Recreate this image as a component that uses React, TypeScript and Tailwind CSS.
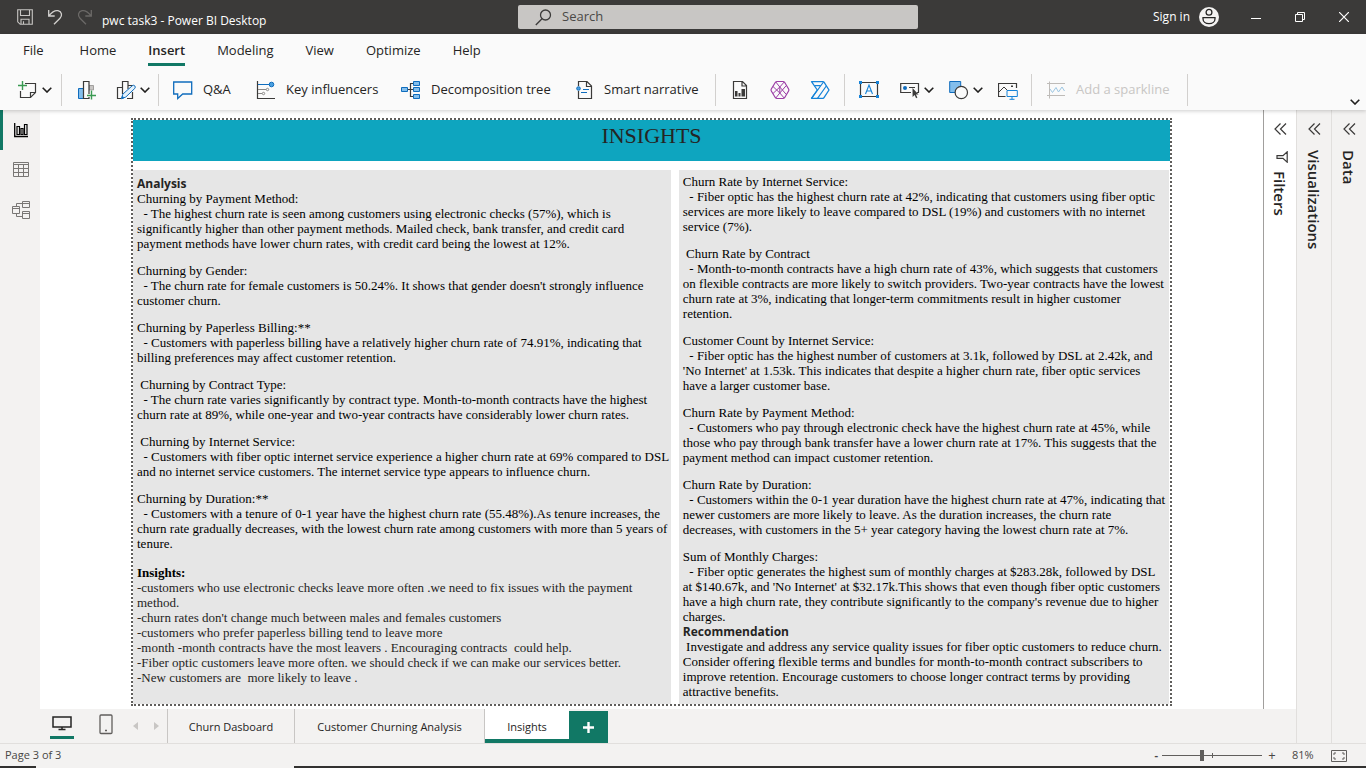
import React, { ReactNode } from "react";

const INK = "#3b3a39";
const BLUE = "#0f6cbd";

function Svg({ w = 20, h = 20, children, className = "" }: { w?: number; h?: number; children: ReactNode; className?: string }) {
  return (
    <svg width={w} height={h} viewBox={`0 0 ${w} ${h}`} fill="none" stroke={INK} className={`shrink-0 ${className}`} aria-hidden="true">
      {children}
    </svg>
  );
}

function Chevron() {
  return (
    <Svg w={10} h={6}>
      <path d="M0.7 0.7 5 5 9.3 0.7" stroke="#201f1e" strokeWidth="1.6" />
    </Svg>
  );
}

function Collapse() {
  return (
    <Svg w={13} h={12}>
      <path d="M6.5 .5 1 6l5.5 5.5M12 .5 6.5 6l5.5 5.5" stroke={INK} strokeWidth="1.2" />
    </Svg>
  );
}

function TitleBar() {
  return (
    <header className="flex h-[34px] items-center bg-[#3b3a39] text-white">
      <button aria-label="Save" className="ml-[17px]">
        <Svg w={16} h={16}>
          <path d="M.7 .7h14.6v14.6H3.2L.7 12.8zM3.5.7v5.8h9V.7M4 15.3v-5h8v5M6.5 12.3v3" stroke="#c8c6c4" strokeWidth="1.1" />
        </Svg>
      </button>
      <button aria-label="Undo" className="ml-[14px]">
        <Svg w={16} h={16}>
          <path d="M1.7 1v6h6M2 6.7C5 3 8 1 11 1.7c4 1 4.5 5 2 7.5L7 15.3" stroke="#d2d0ce" strokeWidth="1.3" />
        </Svg>
      </button>
      <button aria-label="Redo" className="ml-[14px]">
        <Svg w={16} h={16}>
          <path d="M14.3 1v6h-6M14 6.7C11 3 8 1 5 1.7c-4 1-4.5 5-2 7.5l6 6.1" stroke="#6b6967" strokeWidth="1.3" />
        </Svg>
      </button>
      <h1 className="ml-[9px] mt-2 w-[416px] text-xs">pwc task3 - Power BI Desktop</h1>
      <label className="flex h-6 w-[400px] items-center rounded-[2px] bg-[#c8c6c4] pl-[17px]">
        <Svg w={17} h={17}>
          <circle cx="10.5" cy="6" r="5" strokeWidth="1.3" />
          <path d="M7 9.8.8 16" strokeWidth="1.3" />
        </Svg>
        <input aria-label="Search" placeholder="Search" className="ml-[10px] w-full bg-transparent text-[13px] text-[#3b3a39] outline-none placeholder:text-[#4a4947]" />
      </label>
      <button className="ml-auto flex items-center gap-[9px] text-xs">
        Sign in
        <Svg w={20} h={20}>
          <circle cx="10" cy="10" r="10" fill="#f3f2f1" stroke="none" />
          <circle cx="10" cy="5.3" r="2.9" strokeWidth="1.3" stroke="#252423" />
          <path d="M4 10.7h12v1c0 3-2.5 5-6 5s-6-2-6-5z" strokeWidth="1.3" stroke="#252423" />
        </Svg>
      </button>
      <button aria-label="Minimize" className="ml-8">
        <Svg w={10} h={10}><path d="M0 6.5h10" stroke="#fff" /></Svg>
      </button>
      <button aria-label="Restore" className="ml-[34px]">
        <Svg w={10} h={10}><path d="M.5 2.5h7v7h-7zM2.5 2.5v-2h7v7h-2" stroke="#fff" /></Svg>
      </button>
      <button aria-label="Close" className="ml-[34px] mr-[17px]">
        <Svg w={10} h={10}><path d="M0 0l10 10M10 0 0 10" stroke="#fff" strokeWidth="1.2" /></Svg>
      </button>
    </header>
  );
}

function Tabs() {
  const tabs = ["Home", "Insert", "Modeling", "View", "Optimize", "Help"];
  return (
    <nav className="flex h-8 gap-8 pl-[23px] text-[13px] text-[#252423]">
      <button className="mr-1 h-8 pt-0.5">File</button>
      {tabs.map((t) => (
        <button key={t} className={t === "Insert" ? "-mb-px h-8 border-b-[3px] border-[#117865] pt-1 font-semibold" : "h-8 pt-0.5"}>
          {t}
        </button>
      ))}
    </nav>
  );
}

function Group({ children, className }: { children: ReactNode; className: string }) {
  return <div className={`flex h-8 shrink-0 items-center border-r border-[#d2d0ce] ${className}`}>{children}</div>;
}

function Ribbon() {
  return (
    <div className="flex h-11 pt-2 text-[13px] text-[#252423]">
      <Group className="w-[62px] pl-[17px]">
        <button aria-label="New page" className="flex items-center gap-[5px]">
          <Svg>
            <path d="M8 3.5h10.5v9l-5 5h-10V11" strokeWidth="1.2" />
            <path d="M18.5 12.5h-5v5" strokeWidth="1.2" />
            <path d="M5.5 1v9M1 5.500h9" stroke="#3a9a52" strokeWidth="1.4" />
          </Svg>
          <Chevron />
        </button>
      </Group>
      <Group className="w-[97px] gap-[19px] pl-[15px]">
        <button aria-label="New visual">
          <Svg>
            <path d="M1.5 8.5h5v10h-5z" fill="#83beec" stroke={BLUE} />
            <path d="M12 5.5h4.5V10H12z" fill="#c8c6c4" stroke="#a19f9d" />
            <path d="M12 18.5H6.5v-17H12z" strokeWidth="1.2" fill="#fafafa" />
            <path d="M14.500 10.500v9M10 15.500h9" stroke="#fafafa" strokeWidth="3" />
            <path d="M14.500 10.500v9M10 15.500h9" stroke="#3a9a52" strokeWidth="1.4" />
          </Svg>
        </button>
        <button aria-label="More visuals" className="flex items-center gap-1">
          <Svg>
            <path d="M5 18.5H1.500v-11h5M6.500 14V1.500H12V9M12 5.500h5M11 18.500h5.500V12" strokeWidth="1.2" />
            <path d="m5.500 18.700 1.300-4.500 9.500-8.500q1.500-1 2.500.200t0 2.500L9.800 17z" fill="#e3f1fb" stroke={BLUE} />
            <path d="m5.500 18.700.8-2.700 1.800 2z" fill={BLUE} stroke={BLUE} strokeWidth=".5" />
          </Svg>
          <Chevron />
        </button>
      </Group>
      <Group className="w-[557px] pl-[14px]">
        <button className="flex w-[83px] items-center gap-[10px]">
          <Svg>
            <path d="M.7 2h18v12h-9l-5 4.5V14h-4z" stroke={BLUE} strokeWidth="1.3" />
          </Svg>
          Q&amp;A
        </button>
        <button className="flex w-[145px] items-center gap-[10px]">
          <Svg>
            <path d="M1.5 1v17.500H19" strokeWidth="1.2" />
            <path d="M2 9.500h8M2 13.500h4" stroke="#8a8886" />
            <path d="M2 4.500h12" stroke={BLUE} />
            <circle cx="15.500" cy="4.500" r="2.300" fill="#4ba0e0" stroke={BLUE} />
            <circle cx="11.500" cy="9.500" r="1.200" stroke="#8a8886" />
            <circle cx="7.500" cy="13.500" r="1.200" stroke="#8a8886" />
          </Svg>
          Key influencers
        </button>
        <button className="flex w-[174px] items-center gap-[10px]">
          <Svg>
            <path d="M6 9.500h6M12 3.500H9.500v13H12" strokeWidth="1.2" />
            <path d="M.5 7.500h6v4h-6zM12.500 1.500h6v4h-6zM12.500 7.500h6v4h-6zM12.500 14.500h6v4h-6z" fill="#83beec" stroke={BLUE} />
          </Svg>
          Decomposition tree
        </button>
        <button className="flex items-center gap-[9px]">
          <Svg>
            <path d="M3.500 6V1.500H12l4.500 4.500v12.500h-13V11M11.500 1.500v5h5" strokeWidth="1.2" />
            <circle cx="3.500" cy="8.500" r="1.800" fill="#4ba0e0" stroke={BLUE} />
            <path d="M8 9.500h6M6 12.500h6" stroke={BLUE} />
          </Svg>
          Smart narrative
        </button>
      </Group>
      <Group className="w-[129px] gap-5 pl-[14px]">
        <button aria-label="Paginated report">
          <Svg>
            <path d="M3.500 1.500h9l4 4v13h-13zM12 1.500V6h4.500" strokeWidth="1.2" />
            <path d="M5 11h2.500v5.500H5zM8.500 13h2v3.500h-2zM11.500 9H15v7.500h-3.500z" fill={INK} stroke="none" />
          </Svg>
        </button>
        <button aria-label="Power Apps">
          <Svg>
            <path d="M7 1.500h6q1 0 1.600.8l4 6.700q.6 1 0 2l-4 6.700q-.6.800-1.600.800H7q-1 0-1.600-.8L1.300 11q-.6-1 0-2l4.100-6.700q.6-.8 1.600-.8z" stroke="#9b3da5" strokeWidth="1.200" />
            <path d="m5.800 2 4 5 4.400-5M9.800 7v6M5.800 18l4-5 4.400 5M3 6.500 9.800 13M3 13.500 9.800 7l6.500 7.500M9.800 13l6.500-7.500" stroke="#9b3da5" strokeWidth="1" />
          </Svg>
        </button>
        <button aria-label="Power Automate">
          <Svg>
            <path d="M1.500 1.700h11.500q.6 0 1 .5L19 10l-5 7.700q-.4.600-1 .600H1.500L7.300 10z" stroke="#1683d8" strokeWidth="1.300" strokeLinejoin="round" />
            <path d="M1.500 18.300 13.500 2M7.500 18.300 16.300 6M4.300 5.700h6" stroke="#1683d8" strokeWidth="1.200" />
          </Svg>
        </button>
      </Group>
      <Group className="w-[187px] pl-[14px]">
        <button aria-label="Text box">
          <Svg>
            <path d="M1.500 2.500h17v14h-17z" strokeWidth="1.2" />
            <path d="M0 1h3v3H0zM17 1h3v3h-3zM0 15h3v3H0zM17 15h3v3h-3z" fill="#1683d8" stroke="none" />
            <path d="m6.500 14 3.500-9 3.500 9M7.700 11h4.600" stroke="#1683d8" strokeWidth="1.1" />
          </Svg>
        </button>
        <button aria-label="Buttons" className="ml-[21px] flex items-center gap-1">
          <Svg>
            <path d="M11 12.500H.7v-9h17.800v9H17" strokeWidth="1.2" />
            <circle cx="5" cy="8" r="2" fill={BLUE} stroke="none" />
            <path d="M9 7.500h6" />
            <path d="m12.500 8 .1 9 2-2 1.500 3.300 1.300-.7-1.500-3.200h2.600z" fill={INK} stroke="none" />
          </Svg>
          <Chevron />
        </button>
        <button aria-label="Shapes" className="ml-[15px] flex items-center gap-1">
          <Svg>
            <path d="M.7 1.500h11v11h-11z" fill="#83beec" stroke={BLUE} />
            <circle cx="12.300" cy="12.500" r="6.200" fill="#fafafa" strokeWidth="1.2" />
          </Svg>
          <Chevron />
        </button>
        <button aria-label="Image" className="ml-[15px]">
          <Svg>
            <path d="M7.500 16.500h-7v-13h18V8" strokeWidth="1.2" />
            <path d="m1 12 5-5 4 4" />
            <path d="M13 5.500h2V7h-2z" fill={INK} stroke="none" />
            <path d="M9 10.500h10.300v6H9zM14 16.500v3M11.500 19.300h5" fill="#fafafa" stroke="#1683d8" />
          </Svg>
        </button>
      </Group>
      <Group className="w-[156px] pl-[14px]">
        <button disabled className="flex items-center gap-[10px] text-[#c8c6c4]">
          <Svg>
            <path d="M3.500 1.500v17M1 3.500h18M1 15.500h18" stroke="#bebbb8" />
            <path d="m4 9 2.500 3.500 3.500-5 2.500 4.500 3.500-5 2.500 4" stroke="#9cc6e2" />
          </Svg>
          Add a sparkline
        </button>
      </Group>
      <button aria-label="Collapse ribbon" className="ml-auto mr-[6px] mt-[25px] self-start">
        <Chevron />
      </button>
    </div>
  );
}

function ViewRail() {
  return (
    <nav className="flex w-10 shrink-0 flex-col bg-[#f3f2f1]">
      <button aria-label="Report view" className="flex h-10 items-center border-l-[3px] border-[#117865] pl-[11px]">
        <Svg w={15} h={16}>
          <path d="M.7 1v13.500H14" stroke="#000" strokeWidth="1.300" />
          <path d="M3 4.500h2.500v8H3zM7 6.500h2v6H7zM10.500 2.500H13v10h-2.500z" stroke="#000" strokeWidth="1.200" />
        </Svg>
      </button>
      <button aria-label="Table view" className="flex h-10 items-center pl-[13px]">
        <Svg w={16} h={16}>
          <path d="M.5 .5h15v14H.5zM.5 2.500h15M.5 6.500h15M.5 10.500h15M5.500 2.500v12M10.500 2.500v12" stroke="#797775" />
        </Svg>
      </button>
      <button aria-label="Model view" className="flex h-10 items-center pl-3">
        <Svg w={18} h={18}>
          <path d="M.5 5.500h7v7h-7zM.5 7.500h7M10.500 .5h7v6h-7zM10.500 2.500h7M10.500 10.500h7v7h-7zM10.500 12.500h7M4.500 5.500v-3h6M4.500 12.500v3h6" stroke="#797775" />
        </Svg>
      </button>
    </nav>
  );
}

const leftNotes = [
  `Churning by Payment Method:
  - The highest churn rate is seen among customers using electronic checks (57%), which is
significantly higher than other payment methods. Mailed check, bank transfer, and credit card
payment methods have lower churn rates, with credit card being the lowest at 12%.`,
  `Churning by Gender:
  - The churn rate for female customers is 50.24%. It shows that gender doesn't strongly influence
customer churn.`,
  `Churning by Paperless Billing:**
  - Customers with paperless billing have a relatively higher churn rate of 74.91%, indicating that
billing preferences may affect customer retention.`,
  ` Churning by Contract Type:
  - The churn rate varies significantly by contract type. Month-to-month contracts have the highest
churn rate at 89%, while one-year and two-year contracts have considerably lower churn rates.`,
  ` Churning by Internet Service:
  - Customers with fiber optic internet service experience a higher churn rate at 69% compared to DSL
and no internet service customers. The internet service type appears to influence churn.`,
  `Churning by Duration:**
  - Customers with a tenure of 0-1 year have the highest churn rate (55.48%).As tenure increases, the
churn rate gradually decreases, with the lowest churn rate among customers with more than 5 years of
tenure.`,
];

const insights = `-customers who use electronic checks leave more often .we need to fix issues with the payment
method.
-churn rates don't change much between males and females customers
-customers who prefer paperless billing tend to leave more
-month -month contracts have the most leavers . Encouraging contracts  could help.
-Fiber optic customers leave more often. we should check if we can make our services better.
-New customers are  more likely to leave .`;

const rightNotes = [
  `Churn Rate by Internet Service:
  - Fiber optic has the highest churn rate at 42%, indicating that customers using fiber optic
services are more likely to leave compared to DSL (19%) and customers with no internet
service (7%).`,
  ` Churn Rate by Contract
  - Month-to-month contracts have a high churn rate of 43%, which suggests that customers
on flexible contracts are more likely to switch providers. Two-year contracts have the lowest
churn rate at 3%, indicating that longer-term commitments result in higher customer
retention.`,
  `Customer Count by Internet Service:
  - Fiber optic has the highest number of customers at 3.1k, followed by DSL at 2.42k, and
'No Internet' at 1.53k. This indicates that despite a higher churn rate, fiber optic services
have a larger customer base.`,
  `Churn Rate by Payment Method:
  - Customers who pay through electronic check have the highest churn rate at 45%, while
those who pay through bank transfer have a lower churn rate at 17%. This suggests that the
payment method can impact customer retention.`,
  `Churn Rate by Duration:
  - Customers within the 0-1 year duration have the highest churn rate at 47%, indicating that
newer customers are more likely to leave. As the duration increases, the churn rate
decreases, with customers in the 5+ year category having the lowest churn rate at 7%.`,
  `Sum of Monthly Charges:
  - Fiber optic generates the highest sum of monthly charges at $283.28k, followed by DSL
at $140.67k, and 'No Internet' at $32.17k.This shows that even though fiber optic customers
have a high churn rate, they contribute significantly to the company's revenue due to higher
charges.`,
];

const recommendation = ` Investigate and address any service quality issues for fiber optic customers to reduce churn.
Consider offering flexible terms and bundles for month-to-month contract subscribers to
improve retention. Encourage customers to choose longer contract terms by providing
attractive benefits.`;

function NoteHeading({ children }: { children: ReactNode }) {
  return <h3 className="font-['Open_Sans',sans-serif] text-xs font-bold leading-[15px] text-[#252423]">{children}</h3>;
}

function ReportPage() {
  return (
    <main className="flex flex-1 flex-col bg-white px-[91px] pb-[3px] pt-2">
      <article className="flex flex-1 flex-col border-2 border-dotted border-[#605e5c] font-['Liberation_Serif',serif] text-[13px] leading-[15px] text-black">
        <h2 className="h-[41px] bg-[#0ea5bf] text-center text-[22px] leading-8 text-[#252423]">INSIGHTS</h2>
        <div className="mt-[9px] flex flex-1 gap-2 pr-px">
          <section className="flex-[538] whitespace-pre bg-[#e6e6e6] pl-1 pt-[6px]">
            <NoteHeading>Analysis</NoteHeading>
            <div className="flex flex-col gap-3">
              {leftNotes.map((n) => <p key={n}>{n}</p>)}
            </div>
            <h3 className="mt-[14px] font-bold">Insights:</h3>
            <p className="text-[#252423]">{insights}</p>
          </section>
          <section className="flex-[490] whitespace-pre bg-[#e6e6e6] pl-1 pt-1">
            <div className="flex flex-col gap-3">
              {rightNotes.map((n) => <p key={n}>{n}</p>)}
            </div>
            <NoteHeading>Recommendation</NoteHeading>
            <p>{recommendation}</p>
          </section>
        </div>
      </article>
    </main>
  );
}

function PageTabs() {
  return (
    <nav className="flex h-[34px] bg-[#f3f2f1] text-[#252423]">
      <button aria-label="Desktop layout" className="ml-[10px] flex h-[30px] w-6 flex-col items-center justify-between border-b-[3px] border-[#117865] pt-[7px]">
        <Svg w={20} h={15}>
          <path d="M1 1h18v10H1zM10 11v3M6.500 13.500h7" strokeWidth="1.500" stroke="#252423" />
        </Svg>
      </button>
      <button aria-label="Mobile layout" className="ml-[25px] mt-[5px] self-start">
        <Svg w={14} h={21}>
          <rect x="1" y="1" width="12" height="18.500" rx="1" stroke="#605e5c" strokeWidth="1.300" />
          <path d="M6 16.500h2" stroke="#605e5c" strokeWidth="1.500" />
        </Svg>
      </button>
      <button aria-label="Previous page" className="ml-5"><Svg w={5} h={8}><path d="M5 0v8L0 4z" fill="#c8c6c4" stroke="none" /></Svg></button>
      <button aria-label="Next page" className="ml-4"><Svg w={5} h={8}><path d="M0 0v8l5-4z" fill="#c8c6c4" stroke="none" /></Svg></button>
      <div className="ml-2 flex text-[11px]">
        <button className="w-[128px] border-x border-[#c8c6c4] pt-0.5">Churn Dasboard</button>
        <button className="w-[190px] border-r border-[#c8c6c4] pt-0.5">Customer Churning Analysis</button>
        <button className="w-[84px] border-b-4 border-[#117865] bg-white pt-1.5">Insights</button>
      </div>
      <button aria-label="Add page" className="mt-0.5 flex w-[39px] items-center justify-center bg-[#117865]">
        <Svg w={11} h={11}><path d="M5.500 0v11M0 5.500h11" stroke="#fff" strokeWidth="2.400" /></Svg>
      </button>
    </nav>
  );
}

function SidePane({ label }: { label: string }) {
  return (
    <aside className="flex w-[35px] shrink-0 flex-col items-center border-l border-[#e1dfdd] bg-[#f3f2f1] pt-[13px]">
      <button aria-label={`Expand ${label}`}><Collapse /></button>
      <h2 className="mt-[15px] text-[15px] leading-5 font-semibold text-[#252423] [writing-mode:vertical-rl]">{label}</h2>
    </aside>
  );
}

function StatusBar() {
  return (
    <footer className="flex h-[23px] items-center border-t border-[#e1dfdd] pt-px text-[11px] text-[#484644]">
      <span className="ml-[5px]">Page 3 of 3</span>
      <button aria-label="Zoom out" className="ml-auto font-bold">-</button>
      <Svg w={100} h={11} className="ml-[4px]">
        <path d="M0 5.500h100" stroke="#605e5c" />
        <path d="M38 0h4v11h-4z" fill="#605e5c" stroke="none" />
        <path d="M50.500 3v5" stroke="#605e5c" />
      </Svg>
      <button aria-label="Zoom in" className="ml-[6px] w-[8px] text-[13px]">+</button>
      <span className="ml-4 w-[39px]">81%</span>
      <button aria-label="Fit to page" className="mr-[19px]">
        <Svg w={16} h={12}>
          <path d="M.5 .5h15v11H.5z" stroke="#605e5c" />
          <path d="M3 5V3h2M11 3h2v2M3 7v2h2M11 9h2V7" stroke="#605e5c" />
        </Svg>
      </button>
    </footer>
  );
}

export default function App() {
  return (
    <div className="flex min-h-screen flex-col bg-[#f3f2f1] font-['Open_Sans',sans-serif]">
      <TitleBar />
      <div className="relative bg-[#fafafa] shadow-[0_1px_4px_rgba(0,0,0,0.2)]">
        <Tabs />
        <Ribbon />
      </div>
      <div className="flex flex-1">
        <ViewRail />
        <div className="flex min-w-0 flex-1 flex-col">
          <div className="flex flex-1">
            <ReportPage />
            <aside className="flex w-[33px] shrink-0 flex-col items-center border-l border-[#a19f9d] bg-white pt-[13px]">
              <button aria-label="Expand Filters"><Collapse /></button>
              <Svg w={12} h={12} className="ml-1 mt-4">
                <path d="M11.200 .800v10.400L7 7.300H1V4.700h6z" strokeWidth="1.200" />
              </Svg>
              <h2 className="mt-2 text-[15px] leading-5 font-semibold text-[#252423] [writing-mode:vertical-rl]">Filters</h2>
            </aside>
          </div>
          <PageTabs />
        </div>
        <SidePane label="Visualizations" />
        <SidePane label="Data" />
      </div>
      <StatusBar />
      <div className="flex h-0.5 bg-[#323130]">
        <div className="ml-9 w-[258px] bg-[#f3f2f1]" />
      </div>
    </div>
  );
}
